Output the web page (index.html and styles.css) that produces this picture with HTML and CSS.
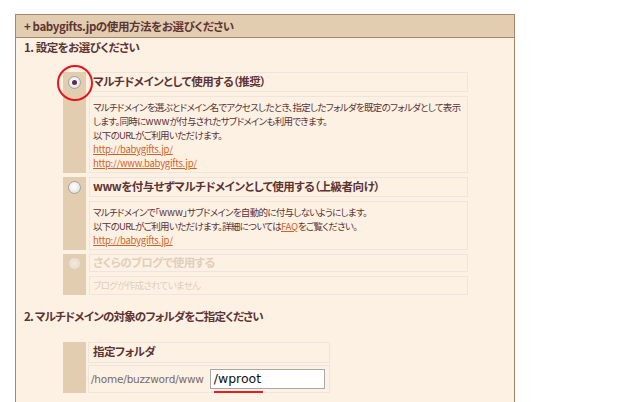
FILE: index.html
```html
<!DOCTYPE html>
<html lang="ja">
<head>
<meta charset="utf-8">
<title>babygifts.jp</title>
<link rel="stylesheet" href="styles.css">
</head>
<body>
<div class="panel">
  <div class="panel-head">+ babygifts.jpの使用方法をお選びください</div>
  <div class="section-title">1. 設定をお選びください</div>

  <div class="options">
    <div class="opt">
      <div class="opt-side">
        <span class="radio checked"></span>
        <span class="highlight"></span>
      </div>
      <div class="opt-main">
        <div class="opt-title">マルチドメインとして使用する（推奨）</div>
        <div class="opt-desc">
          <div class="line">マルチドメインを選ぶとドメイン名でアクセスしたとき、指定したフォルダを既定のフォルダとして表示</div>
          <div class="line">します。同時に<span class="latin">www</span>が付与されたサブドメインも利用できます。</div>
          <div class="line">以下のURLがご利用いただけます。</div>
          <div class="line"><a class="link" href="#">http://babygifts.jp/</a></div>
          <div class="line"><a class="link" href="#">http://www.babygifts.jp/</a></div>
        </div>
      </div>
    </div>

    <div class="opt">
      <div class="opt-side">
        <span class="radio"></span>
      </div>
      <div class="opt-main">
        <div class="opt-title">wwwを付与せずマルチドメインとして使用する（上級者向け）</div>
        <div class="opt-desc">
          <div class="line">マルチドメインで「<span class="latin">www</span>」サブドメインを自動的に付与しないようにします。</div>
          <div class="line">以下のURLがご利用いただけます。詳細については<a class="link" href="#">FAQ</a>をご覧ください。</div>
          <div class="line"><a class="link" href="#">http://babygifts.jp/</a></div>
        </div>
      </div>
    </div>

    <div class="opt disabled">
      <div class="opt-side">
        <span class="radio"></span>
      </div>
      <div class="opt-main">
        <div class="opt-title">さくらのブログで使用する</div>
        <div class="opt-desc">
          <div class="line">ブログが作成されていません</div>
        </div>
      </div>
    </div>
  </div>

  <div class="section-title second">2. マルチドメインの対象のフォルダをご指定ください</div>

  <div class="folder">
    <div class="folder-side"></div>
    <div class="folder-main">
      <div class="folder-title">指定フォルダ</div>
      <div class="folder-value">
        <span class="folder-prefix">/home/buzzword/www</span>
        <span class="input-wrap">
          <span class="input">/wproot</span>
          <span class="underline"></span>
        </span>
      </div>
    </div>
  </div>
</div>
</body>
</html>
```

FILE: styles.css
```css
html, body {
  margin: 0;
  padding: 0;
  background: #ffffff;
}

body {
  font-family: "Noto Sans CJK JP", "Noto Sans", sans-serif;
  color: #5c3434;
  font-feature-settings: "palt";
}

.panel {
  box-sizing: border-box;
  width: 500px;
  margin: 14px 0 0 15px;
  border: 1px solid #a9856b;
  background: #fdf1e4;
  padding-bottom: 40px;
}

.panel-head {
  height: 22px;
  line-height: 22px;
  background: #e3cdb0;
  border-bottom: 1px solid #a9856b;
  padding-left: 8px;
  font-size: 11.5px;
  font-weight: bold;
  letter-spacing: -0.4px;
  color: #5e3535;
}

.section-title {
  padding: 1px 0 0 8px;
  line-height: 16px;
  height: 17px;
  font-size: 11.5px;
  font-weight: bold;
  letter-spacing: -0.5px;
}

.section-title.second {
  margin-top: 12px;
  letter-spacing: -0.8px;
}

.options {
  margin: 16px 0 0 47px;
  display: flex;
  flex-direction: column;
  gap: 4px;
  width: 405px;
}

.opt {
  display: grid;
  grid-template-columns: 23px 379px;
  column-gap: 3px;
}

.opt-side {
  position: relative;
  background: #e3cdb0;
  display: flex;
  justify-content: center;
  padding-top: 4px;
}

.opt-main {
  display: flex;
  flex-direction: column;
  gap: 4px;
}

.opt-title {
  box-sizing: border-box;
  height: 20px;
  line-height: 17px;
  border: 1px solid #f1e4dc;
  padding-left: 3px;
  font-size: 11.5px;
  font-weight: bold;
  letter-spacing: -0.5px;
  white-space: nowrap;
}

.opt-desc {
  border: 1px solid #f1e4dc;
  padding: 3px 4px 2px 3px;
  font-size: 9.5px;
  letter-spacing: -0.7px;
}

.line {
  line-height: 14px;
  height: 14px;
  white-space: nowrap;
}

.latin {
  letter-spacing: 0;
  font-size: 10px;
}

.link {
  color: #d4631f;
  text-decoration: underline;
  font-size: 9.5px;
  letter-spacing: -0.25px;
}

.radio {
  box-sizing: border-box;
  display: block;
  width: 13px;
  height: 13px;
  border-radius: 50%;
  border: 1px solid #a3a3a3;
  background: radial-gradient(circle at 45% 40%, #ffffff 0%, #eeeeee 50%, #d2d2d2 100%);
  position: relative;
}

.radio.checked::after {
  content: "";
  position: absolute;
  left: 3px;
  top: 3px;
  width: 5px;
  height: 5px;
  border-radius: 50%;
  background: #5b2e52;
}

.highlight {
  position: absolute;
  left: -6px;
  top: -7px;
  width: 36px;
  height: 36px;
  box-sizing: border-box;
  border: 2px solid #e8141a;
  border-radius: 50%;
}

.opt.disabled .opt-side {
  padding-top: 3px;
}

.opt.disabled .radio {
  border-color: #ddd0bd;
  background: radial-gradient(circle, #f0e8dc 0%, #e6dccb 100%);
}

.opt.disabled .opt-title {
  height: 18px;
  line-height: 15px;
  color: #e0cfbd;
}

.opt.disabled .opt-desc {
  padding: 1px 4px 1px 3px;
  color: #e0cfbd;
}

.opt.disabled .line {
  line-height: 15px;
  height: 15px;
}

.folder {
  margin: 17px 0 0 47px;
  display: grid;
  grid-template-columns: 23px 242px;
  column-gap: 2px;
}

.folder-side {
  background: #e3cdb0;
}

.folder-main {
  display: flex;
  flex-direction: column;
  gap: 2px;
}

.folder-title {
  box-sizing: border-box;
  height: 21px;
  line-height: 17px;
  border: 1px solid #f1e4dc;
  padding-left: 4px;
  font-size: 11.5px;
  font-weight: bold;
  letter-spacing: -0.5px;
}

.folder-value {
  box-sizing: border-box;
  height: 28px;
  border: 1px solid #f1e4dc;
  display: flex;
  align-items: center;
  padding-left: 2px;
}

.folder-prefix {
  font-family: "DejaVu Sans", "Liberation Sans", sans-serif;
  font-size: 10.5px;
  color: #7a6a6a;
  letter-spacing: -0.2px;
}

.input-wrap {
  position: relative;
  margin-left: 6px;
  display: block;
}

.input {
  box-sizing: border-box;
  display: block;
  width: 115px;
  height: 20px;
  line-height: 18px;
  border: 1px solid #a8a8a8;
  background: #ffffff;
  padding-left: 3px;
  font-family: "DejaVu Sans", "Liberation Sans", sans-serif;
  font-size: 12.5px;
  color: #111111;
}

.underline {
  position: absolute;
  left: 4px;
  top: 22px;
  width: 49px;
  height: 2px;
  background: #ea1c22;
}
```
